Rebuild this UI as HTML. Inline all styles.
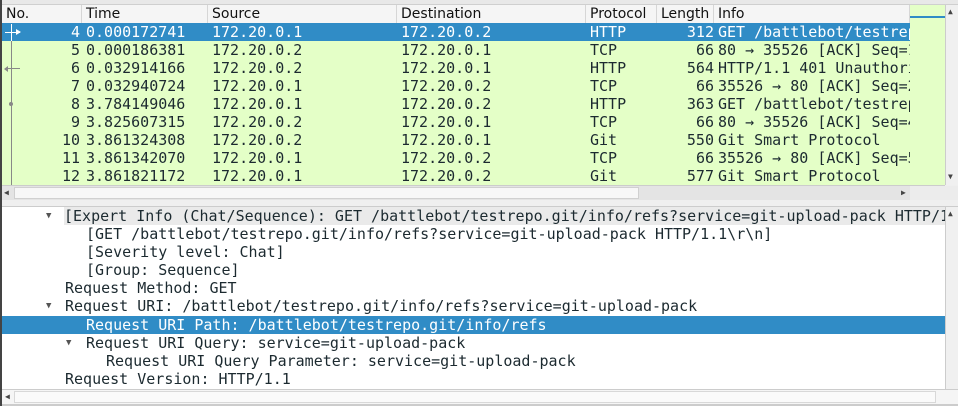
<!DOCTYPE html>
<html><head><style>
*{margin:0;padding:0;box-sizing:border-box}
body{width:958px;height:406px;overflow:hidden;background:#efefef;position:relative;font-family:"DejaVu Sans Mono","Liberation Mono",monospace;font-size:15px;color:#1c2a30}
.abs{position:absolute}
.hdr{position:absolute;top:5px;height:18px;font-family:"DejaVu Sans","Liberation Sans",sans-serif;font-size:14px;line-height:18px;color:#111;border-right:1px solid #d6d6d6;padding-left:4px;background:#f5f5f5}
.row{position:absolute;left:2px;width:908px;height:18px;line-height:18px;background:#e4ffc7;white-space:pre;overflow:hidden}
.row span{position:absolute;top:0}
.sel{background:#308cc6;color:#fff}
.d{position:absolute;left:2px;width:943px;height:18px;line-height:18px;white-space:pre;background:#fff;overflow:hidden}
.d.sel{background:#308cc6;color:#fff}
.tri{font-size:9px;color:#555}
</style></head><body>
<div class="abs" style="left:0;top:0;width:958px;height:5px;background:#e8e8e8;border-bottom:1px solid #cfcfcf"></div>
<div class="abs" style="left:0;top:0;width:2px;height:406px;background:#444"></div>
<div class="hdr" style="left:2px;width:80px">No.</div>
<div class="hdr" style="left:82px;width:126px">Time</div>
<div class="hdr" style="left:208px;width:189px">Source</div>
<div class="hdr" style="left:397px;width:189px">Destination</div>
<div class="hdr" style="left:586px;width:71px">Protocol</div>
<div class="hdr" style="left:657px;width:57px">Length</div>
<div class="hdr" style="left:714px;width:196px">Info</div>
<div class="abs" style="left:910px;top:5px;width:35px;height:180px;background:#e4ffc7"></div>
<div class="abs" style="left:910px;top:16px;width:35px;height:2px;background:#308cc6"></div>
<div class="abs" style="left:945px;top:5px;width:13px;height:180px;background:#f0f0f0;border-left:1px solid #ccc"></div>
<div class="abs" style="left:948px;top:7px;font-size:8px;color:#444">▲</div>
<div class="abs" style="left:948px;top:172px;font-size:8px;color:#444">▼</div>

<div class="row sel" style="top:23px"><span style="right:830px">4</span><span style="left:84px">0.000172741</span><span style="left:210px">172.20.0.1</span><span style="left:399px">172.20.0.2</span><span style="left:588px">HTTP</span><span style="right:196px">312</span><span style="left:716px">GET /battlebot/testrep</span></div>
<div class="row" style="top:41px"><span style="right:830px">5</span><span style="left:84px">0.000186381</span><span style="left:210px">172.20.0.2</span><span style="left:399px">172.20.0.1</span><span style="left:588px">TCP</span><span style="right:196px">66</span><span style="left:716px">80 → 35526 [ACK] Seq=1</span></div>
<div class="row" style="top:59px"><span style="right:830px">6</span><span style="left:84px">0.032914166</span><span style="left:210px">172.20.0.2</span><span style="left:399px">172.20.0.1</span><span style="left:588px">HTTP</span><span style="right:196px">564</span><span style="left:716px">HTTP/1.1 401 Unauthori</span></div>
<div class="row" style="top:77px"><span style="right:830px">7</span><span style="left:84px">0.032940724</span><span style="left:210px">172.20.0.1</span><span style="left:399px">172.20.0.2</span><span style="left:588px">TCP</span><span style="right:196px">66</span><span style="left:716px">35526 → 80 [ACK] Seq=2</span></div>
<div class="row" style="top:95px"><span style="right:830px">8</span><span style="left:84px">3.784149046</span><span style="left:210px">172.20.0.1</span><span style="left:399px">172.20.0.2</span><span style="left:588px">HTTP</span><span style="right:196px">363</span><span style="left:716px">GET /battlebot/testrep</span></div>
<div class="row" style="top:113px"><span style="right:830px">9</span><span style="left:84px">3.825607315</span><span style="left:210px">172.20.0.2</span><span style="left:399px">172.20.0.1</span><span style="left:588px">TCP</span><span style="right:196px">66</span><span style="left:716px">80 → 35526 [ACK] Seq=4</span></div>
<div class="row" style="top:131px"><span style="right:830px">10</span><span style="left:84px">3.861324308</span><span style="left:210px">172.20.0.2</span><span style="left:399px">172.20.0.1</span><span style="left:588px">Git</span><span style="right:196px">550</span><span style="left:716px">Git Smart Protocol</span></div>
<div class="row" style="top:149px"><span style="right:830px">11</span><span style="left:84px">3.861342070</span><span style="left:210px">172.20.0.1</span><span style="left:399px">172.20.0.2</span><span style="left:588px">TCP</span><span style="right:196px">66</span><span style="left:716px">35526 → 80 [ACK] Seq=5</span></div>
<div class="row" style="top:167px"><span style="right:830px">12</span><span style="left:84px">3.861821172</span><span style="left:210px">172.20.0.1</span><span style="left:399px">172.20.0.2</span><span style="left:588px">Git</span><span style="right:196px">577</span><span style="left:716px">Git Smart Protocol</span></div>
<div class="abs" style="left:11px;top:32px;width:1px;height:153px;background:#888"></div>
<div class="abs" style="left:5px;top:32px;width:15px;height:1px;background:#fff"></div>
<div class="abs" style="left:11px;top:24px;width:1px;height:17px;background:#fff"></div>
<div class="abs" style="left:16px;top:29px;width:0;height:0;border-left:5px solid #fff;border-top:3px solid transparent;border-bottom:3px solid transparent"></div>
<div class="abs" style="left:7px;top:68px;width:13px;height:1px;background:#888"></div>
<div class="abs" style="left:4px;top:66px;width:0;height:0;border-right:4px solid #888;border-top:3px solid transparent;border-bottom:3px solid transparent"></div>
<div class="abs" style="left:9px;top:102px;width:4px;height:4px;border-radius:2px;background:#888"></div>

<div class="abs" style="left:2px;top:185px;width:943px;height:15px;background:#e4e4e4;border-top:1px solid #ccc"></div>
<div class="abs" style="left:4px;top:188px;font-size:8px;color:#444">◀</div>
<div class="abs" style="left:14px;top:187px;width:625px;height:12px;background:#f7f7f7;border:1px solid #d0d0d0"></div>
<div class="abs" style="left:901px;top:188px;font-size:8px;color:#444">▶</div>
<div class="abs" style="left:910px;top:186px;width:48px;height:14px;background:#ececec"></div>

<div class="abs" style="left:2px;top:206px;width:956px;height:200px;background:#fff;border-top:1px solid #ccc"></div>
<div class="d" style="top:207px"><span class="tri" style="position:absolute;left:44px">▼</span><span style="position:absolute;left:62px;background:#eaeaea">[Expert Info (Chat/Sequence): GET /battlebot/testrepo.git/info/refs?service=git-upload-pack HTTP/1</span></div>
<div class="d" style="top:225px"><span style="position:absolute;left:84px">[GET /battlebot/testrepo.git/info/refs?service=git-upload-pack HTTP/1.1\r\n]</span></div>
<div class="d" style="top:243px"><span style="position:absolute;left:84px">[Severity level: Chat]</span></div>
<div class="d" style="top:261px"><span style="position:absolute;left:84px">[Group: Sequence]</span></div>
<div class="d" style="top:279px"><span style="position:absolute;left:63px">Request Method: GET</span></div>
<div class="d" style="top:297px"><span class="tri" style="position:absolute;left:44px">▼</span><span style="position:absolute;left:63px">Request URI: /battlebot/testrepo.git/info/refs?service=git-upload-pack</span></div>
<div class="d sel" style="top:316px"><span style="position:absolute;left:84px">Request URI Path: /battlebot/testrepo.git/info/refs</span></div>
<div class="d" style="top:334px"><span class="tri" style="position:absolute;left:64px">▼</span><span style="position:absolute;left:84px">Request URI Query: service=git-upload-pack</span></div>
<div class="d" style="top:352px"><span style="position:absolute;left:104px">Request URI Query Parameter: service=git-upload-pack</span></div>
<div class="d" style="top:370px"><span style="position:absolute;left:63px">Request Version: HTTP/1.1</span></div>
<div class="abs" style="left:945px;top:207px;width:13px;height:183px;background:#f0f0f0;border-left:1px solid #ccc"></div>
<div class="abs" style="left:948px;top:209px;font-size:8px;color:#444">▲</div>
<div class="abs" style="left:2px;top:389px;width:956px;height:17px;background:#f5f5f5;border-top:1px solid #ccc;border-bottom:2px solid #ccc"></div>
<div class="abs" style="left:5px;top:392px;font-size:8px;color:#444">◀</div>
<div class="abs" style="left:14px;top:391px;width:922px;height:12px;background:#fafafa;border:1px solid #d8d8d8"></div>
</body></html>
